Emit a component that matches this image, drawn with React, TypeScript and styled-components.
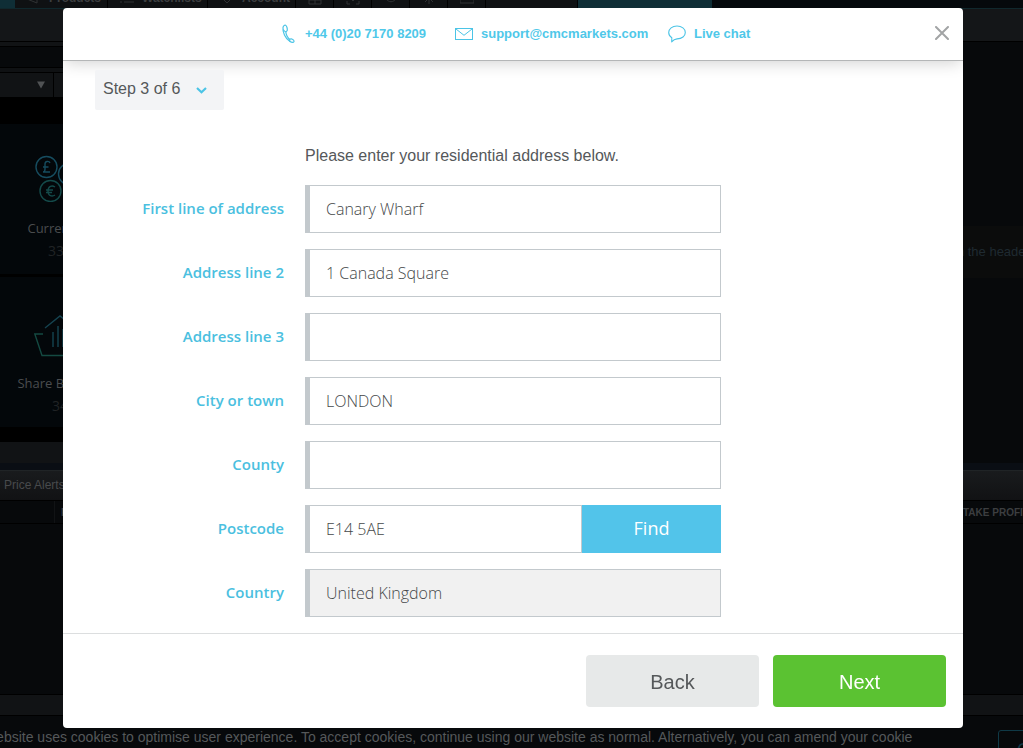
import React from "react";
import styled, { createGlobalStyle } from "styled-components";

const humanist = '"Open Sans", "Noto Sans", sans-serif';
const grotesque = '"Liberation Sans", Arial, sans-serif';

const GlobalStyle = createGlobalStyle`
  *, *::before, *::after { box-sizing: border-box; }
  body { margin: 0; background: #07090b; font-family: ${grotesque}; overflow: hidden; }
  button, input { font-family: inherit; margin: 0; }
  button { cursor: pointer; }
  svg { flex: none; }
`;

/* ---------- platform behind the dialog ---------- */

const Platform = styled.div`
  height: 100vh;
  overflow: hidden;
  display: flex;
  flex-direction: column;
  color: #3c3e40;
`;

const NavBar = styled.nav`
  display: flex;
  flex: none;
  height: 36px;
  margin-top: -27px;
  background: #05090c;
  border-bottom: 1px solid #10282d;
`;

const NavItem = styled.div<{ $width: number; $active?: boolean }>`
  width: ${(p) => p.$width}px;
  flex: none;
  display: flex;
  align-items: center;
  gap: 8px;
  padding-top: 14px;
  padding-left: ${(p) => (p.$active ? 0 : 12)}px;
  font-size: 12px;
  font-weight: bold;
  white-space: nowrap;
  background: ${(p) => (p.$active ? "#0f2e36" : "#0f1113")};
  border-right: 1px solid ${(p) => (p.$active ? "#0f2e36" : "#000")};
`;

const Strip = styled.div<{ $height: number; $tone?: string }>`
  flex: none;
  height: ${(p) => p.$height}px;
  background: ${(p) => p.$tone ?? "#111315"};
  border-bottom: 1px solid #000;
`;

const Workspace = styled.div`
  flex: none;
  display: flex;
  justify-content: space-between;
  height: 421px;
`;

const Library = styled.section`
  width: 120px;
  display: flex;
  flex-direction: column;
  background: #000;
`;

const LibraryFooter = styled.div`
  flex: none;
  height: 21px;
  margin-top: 12px;
  background: #111315;
`;

const FilterRow = styled.div`
  flex: none;
  display: flex;
  height: 24px;
  margin-bottom: 27px;
  background: #111315;
`;

const FilterCell = styled.div`
  width: 54px;
  display: flex;
  align-items: center;
  justify-content: flex-end;
  padding-right: 8px;
  border-right: 1px solid #000;
`;

const Card = styled.article`
  flex: none;
  height: 150px;
  margin-bottom: 3px;
  padding-top: 28px;
  display: flex;
  flex-direction: column;
  align-items: center;
  background: #03070a;
  font-family: ${humanist};
`;

const CardTitle = styled.h3`
  margin: 16px 0 0;
  font-size: 13px;
  line-height: 20px;
  font-weight: 400;
  color: #4a4c4e;
  white-space: nowrap;
`;

const CardCount = styled.p`
  margin: 3px 0 0;
  font-size: 14px;
  line-height: 20px;
  color: #202325;
`;

const Hint = styled.p`
  width: 200px;
  height: 52px;
  margin: 184px 0 0;
  padding-left: 131px;
  background: #0b0c0c;
  color: #1f2a31;
  font-size: 13px;
  line-height: 52px;
  white-space: nowrap;
`;

const PanelGap = styled.div`
  flex: none;
  height: 7px;
  background: #0a0e14;
`;

const PanelTitle = styled.div`
  flex: none;
  height: 31px;
  padding-left: 4px;
  background: linear-gradient(#191b1d, #111214);
  border-top: 1px solid #202426;
  border-bottom: 1px solid #000;
  color: #484a4c;
  font-size: 12px;
  line-height: 29px;
`;

const ColumnHeads = styled.div`
  flex: none;
  height: 23px;
  display: flex;
  justify-content: space-between;
  border-bottom: 1px solid #000;
  background: #07090b;
  font-size: 10px;
  font-weight: bold;
  line-height: 23px;
  white-space: nowrap;
`;

const FirstHead = styled.span`
  margin-left: 54px;
  padding-left: 6px;
  border-left: 1px solid #111315;
`;

const LastHead = styled.span`
  width: 60px;
`;

const CookieBar = styled.footer`
  flex: none;
  display: flex;
  height: 60px;
  justify-content: space-between;
  padding-top: 14px;
  color: #55585a;
`;

const CookieText = styled.p`
  margin: 0 0 0 -14px;
  font-size: 14px;
  line-height: 14px;
  white-space: nowrap;
`;

const CookieButton = styled.button`
  flex: none;
  width: 120px;
  height: 40px;
  margin-right: -95px;
  padding: 0 18px;
  border: 1px solid #0f3946;
  border-radius: 3px;
  background: transparent;
  color: #0f3946;
  font-size: 18px;
  text-align: left;
`;

/* ---------- dialog ---------- */

const Overlay = styled.div`
  position: fixed;
  inset: 0;
  display: flex;
  justify-content: center;
  padding: 8px 0 20px 3px;
`;

const Dialog = styled.section`
  width: 100%;
  max-width: 900px;
  display: flex;
  flex-direction: column;
  overflow: hidden;
  background: #fff;
  border-radius: 4px;
`;

const DialogHeader = styled.header`
  flex: none;
  display: grid;
  grid-template-columns: 32px 1fr 32px;
  align-items: center;
  height: 53px;
  padding: 0 5px 0 8px;
  border-bottom: 1px solid #b4b6b7;
  box-shadow: 0 4px 16px -2px rgba(0, 0, 0, 0.18);
`;

const Contacts = styled.div`
  grid-column: 2;
  display: grid;
  grid-template-columns: 152px 191px 80px;
  justify-content: center;
  gap: 22px;
`;

const ContactLink = styled.a`
  display: flex;
  align-items: center;
  gap: 8px;
  color: #4fc8e9;
  font-size: 13px;
  font-weight: bold;
  line-height: 20px;
  text-decoration: none;
  white-space: nowrap;
`;

const CloseButton = styled.button`
  display: flex;
  align-items: center;
  justify-content: center;
  height: 32px;
  padding: 0 0 2px;
  border: 0;
  background: none;
`;

const DialogBody = styled.form`
  flex: 1;
  min-height: 0;
  padding: 9px 32px 0;
  color: #55585a;
`;

const StepButton = styled.button`
  display: flex;
  align-items: center;
  gap: 16px;
  height: 40px;
  width: 129px;
  padding: 0 8px 3px;
  border: 0;
  border-radius: 2px;
  background: #f3f4f6;
  color: #55585a;
  font-size: 16px;
  line-height: 20px;

  svg { margin-top: 4px; }
`;

const Fields = styled.div`
  display: grid;
  grid-template-columns: 189px minmax(0, 416px);
  column-gap: 21px;
  row-gap: 16px;
  align-items: center;
  margin-top: 36px;
`;

const Intro = styled.p`
  grid-column: 2;
  margin: 0 0 3px;
  font-size: 16px;
  line-height: 20px;
`;

const Label = styled.label`
  padding-bottom: 2px;
  color: #4bbfe0;
  font-family: ${humanist};
  font-size: 15px;
  font-weight: 600;
  line-height: 20px;
  text-align: right;
`;

const TextInput = styled.input`
  width: 100%;
  min-width: 0;
  height: 48px;
  padding: 0 16px;
  border: 1px solid #c3c9cd;
  border-left-width: 5px;
  border-radius: 0;
  outline: 0;
  background: #fff;
  color: #45484a;
  font-family: ${humanist};
  font-size: 16px;
  font-weight: 300;

  &:read-only { background: #f1f1f1; }
`;

const InputGroup = styled.div`
  display: flex;
`;

const FindButton = styled.button`
  flex: none;
  width: 139px;
  height: 48px;
  padding: 0 0 2px;
  border: 0;
  background: #52c4ea;
  color: #fff;
  font-family: ${humanist};
  font-size: 18px;
  font-weight: 400;
`;

const DialogFooter = styled.footer`
  flex: none;
  display: flex;
  justify-content: flex-end;
  gap: 14px;
  padding: 21px 17px;
  border-top: 1px solid #dcdedf;
`;

const ActionButton = styled.button<{ $primary?: boolean }>`
  width: 173px;
  height: 52px;
  padding: 2px 0 0;
  border: 0;
  border-radius: 4px;
  background: ${(p) => (p.$primary ? "#5bc232" : "#e7e9e9")};
  color: ${(p) => (p.$primary ? "#fff" : "#55585a")};
  font-size: 20px;
`;

/* ---------- icons ---------- */

const PhoneIcon = () => (
  <svg width="16" height="20" viewBox="0 0 16 20" fill="none" stroke="#4bc4e6" strokeWidth="1.2" strokeLinejoin="round">
    <path d="M4.6 1.2 C3.6 .8 2.2 2 2 3.6 C1.5 8 4 14.5 9 17.6 C10.6 18.7 12.6 18.7 13 17.6 C13.4 16.5 11.6 15 10.3 14.8 C9.5 14.7 9.2 15.4 8.8 15.3 C7 14.4 4.8 10.4 4.9 8 C5 7.3 5.9 7.4 6.2 6.6 C6.6 5 5.8 1.7 4.6 1.2 Z" />
    <path d="M2.2 5.6 C3.2 7.6 4.2 7.9 5 7.7 M8.8 15.2 C8.5 16 8.7 17 9.2 17.5" />
  </svg>
);

const MailIcon = () => (
  <svg width="18" height="14" viewBox="0 0 18 14" fill="none" stroke="#4bc4e6">
    <rect x=".5" y="1.5" width="17" height="11" />
    <path d="M1 2 L9 8.3 L17 2" />
  </svg>
);

const ChatIcon = () => (
  <svg width="18" height="18" viewBox="0 0 18 18" fill="none" stroke="#4bc4e6" strokeWidth="1.1" strokeLinejoin="round">
    <path d="M3.7 16.8 L3.8 12.8 C1.8 11.5 .7 9.7 .7 7.6 C.7 3.8 4.3 1 9 1 C13.7 1 17.3 3.8 17.3 7.4 C17.3 11 14 13.8 9 13.9 C7 14.1 5.2 15.1 3.7 16.8 Z" />
  </svg>
);

const CloseIcon = () => (
  <svg width="14" height="14" viewBox="0 0 14 14" stroke="#a2a4a5" strokeWidth="2" strokeLinecap="round">
    <path d="M1 1 L13 13 M13 1 L1 13" />
  </svg>
);

const ChevronIcon = () => (
  <svg width="11" height="7" viewBox="0 0 11 7" fill="none" stroke="#4bc4e6" strokeWidth="2.2">
    <path d="M1 1 L5.5 5.2 L10 1" />
  </svg>
);

const ArrowIcon = () => (
  <svg width="8" height="8" viewBox="0 0 8 8" fill="#505254">
    <path d="M0 .5 H8 L4 7.5 Z" />
  </svg>
);

const CurrencyIcon = () => (
  <svg width="50" height="50" viewBox="0 0 50 50" fill="none" stroke="#164c5f" strokeWidth="1.4">
    <circle cx="11.5" cy="15" r="10.5" />
    <circle cx="15.5" cy="39" r="10.5" stroke="#144a4a" />
    <circle cx="34" cy="22" r="10.5" />
    <path d="M15 11 C14 8.5 10 9 10 12 V17 C10 19 9 20 8 20 H15 M8 15 H13.5" />
    <path d="M20 35 C17 33 13 34 13 39 C13 44 17 45 20 43 M11 38 H18 M11 40.5 H17" stroke="#144a4a" />
  </svg>
);

const BasketIcon = () => (
  <svg width="52" height="52" viewBox="0 0 52 52" fill="none" stroke="#154350" strokeWidth="1.4">
    <path d="M11 23 L26 11 L41 23" />
    <path d="M9 29 H0.8 L8 50.5 H44 L51 29 H43" stroke="#144a42" />
    <path d="M19 27 V42 M24 21 V42 M29 24 V42" />
  </svg>
);

const ToolIcon = ({ path }: { path: string }) => (
  <svg width="14" height="14" viewBox="0 0 14 14" fill="none" stroke="#303234">
    <path d={path} />
  </svg>
);

const tools = [
  "M1 1 H13 V13 H1 Z M7 1 V13 M1 9 H13",
  "M1 4 V1 H4 M10 1 H13 V4 M13 10 V13 H10 M4 13 H1 V10 M4 7 L7 10 L10 7 Z",
  "M2 7 C4 3 10 3 12 7 C10 12 4 12 2 7 Z",
  "M7 1 V13 M1 7 H13 M3 3 L11 11 M11 3 L3 11",
  "M0 2 H14 V12 H0 Z",
];

const addressFields = [
  { id: "line1", label: "First line of address", value: "Canary Wharf" },
  { id: "line2", label: "Address line 2", value: "1 Canada Square" },
  { id: "line3", label: "Address line 3", value: "" },
  { id: "town", label: "City or town", value: "LONDON" },
  { id: "county", label: "County", value: "" },
];

export default function App() {
  return (
    <>
      <GlobalStyle />
      <Platform aria-hidden="true">
        <NavBar>
          <NavItem $width={15} $active />
          <NavItem $width={93}><ToolIcon path="M0 5 L10 1 V12 L0 8 Z" />Products</NavItem>
          <NavItem $width={100}><ToolIcon path="M0 3 H2 M4 3 H14 M0 7 H2 M4 7 H14 M0 11 H2 M4 11 H14" />Watchlists</NavItem>
          <NavItem $width={88}><ToolIcon path="M3 8 L7 12 L11 8 Z" />Account</NavItem>
          {tools.map((path) => (
            <NavItem key={path} $width={38}><ToolIcon path={path} /></NavItem>
          ))}
          <NavItem $width={92} />
          <NavItem $width={134} $active />
        </NavBar>
        <Strip $height={33} $tone="#141618" />
        <Workspace>
          <Library>
            <Strip $height={5} />
            <Strip $height={21} $tone="#07090b" />
            <Strip $height={5} $tone="#0f1113" />
            <FilterRow><FilterCell><ArrowIcon /></FilterCell></FilterRow>
            <Card>
              <CurrencyIcon />
              <CardTitle>Currencies</CardTitle>
              <CardCount>334</CardCount>
            </Card>
            <Card>
              <BasketIcon />
              <CardTitle>Share Baskets</CardTitle>
              <CardCount>34</CardCount>
            </Card>
            <LibraryFooter />
          </Library>
          <Hint>in the header</Hint>
        </Workspace>
        <PanelGap />
        <PanelTitle>Price Alerts</PanelTitle>
        <ColumnHeads>
          <FirstHead>PRODUCT</FirstHead>
          <LastHead>TAKE PROFIT</LastHead>
        </ColumnHeads>
        <Strip $height={171} $tone="#07090b" />
        <Strip $height={21} />
        <CookieBar>
          <CookieText>
            website uses cookies to optimise user experience. To accept cookies, continue using our website as normal. Alternatively, you can amend your cookie
          </CookieText>
          <CookieButton>OK</CookieButton>
        </CookieBar>
      </Platform>

      <Overlay>
        <Dialog role="dialog" aria-modal="true" aria-label="Residential address">
          <DialogHeader>
            <Contacts>
              <ContactLink href="tel:+442071708209"><PhoneIcon />+44 (0)20 7170 8209</ContactLink>
              <ContactLink href="mailto:support@cmcmarkets.com"><MailIcon />support@cmcmarkets.com</ContactLink>
              <ContactLink href="#chat"><ChatIcon />Live chat</ContactLink>
            </Contacts>
            <CloseButton type="button" aria-label="Close"><CloseIcon /></CloseButton>
          </DialogHeader>

          <DialogBody id="address-form" onSubmit={(e) => e.preventDefault()}>
            <StepButton type="button">Step 3 of 6<ChevronIcon /></StepButton>
            <Fields>
              <Intro>Please enter your residential address below.</Intro>
              {addressFields.map((f) => (
                <React.Fragment key={f.id}>
                  <Label htmlFor={f.id}>{f.label}</Label>
                  <TextInput id={f.id} type="text" defaultValue={f.value} />
                </React.Fragment>
              ))}
              <Label htmlFor="postcode">Postcode</Label>
              <InputGroup>
                <TextInput id="postcode" type="text" defaultValue="E14 5AE" />
                <FindButton type="button">Find</FindButton>
              </InputGroup>
              <Label htmlFor="country">Country</Label>
              <TextInput id="country" type="text" value="United Kingdom" readOnly />
            </Fields>
          </DialogBody>

          <DialogFooter>
            <ActionButton type="button">Back</ActionButton>
            <ActionButton type="submit" form="address-form" $primary>Next</ActionButton>
          </DialogFooter>
        </Dialog>
      </Overlay>
    </>
  );
}
